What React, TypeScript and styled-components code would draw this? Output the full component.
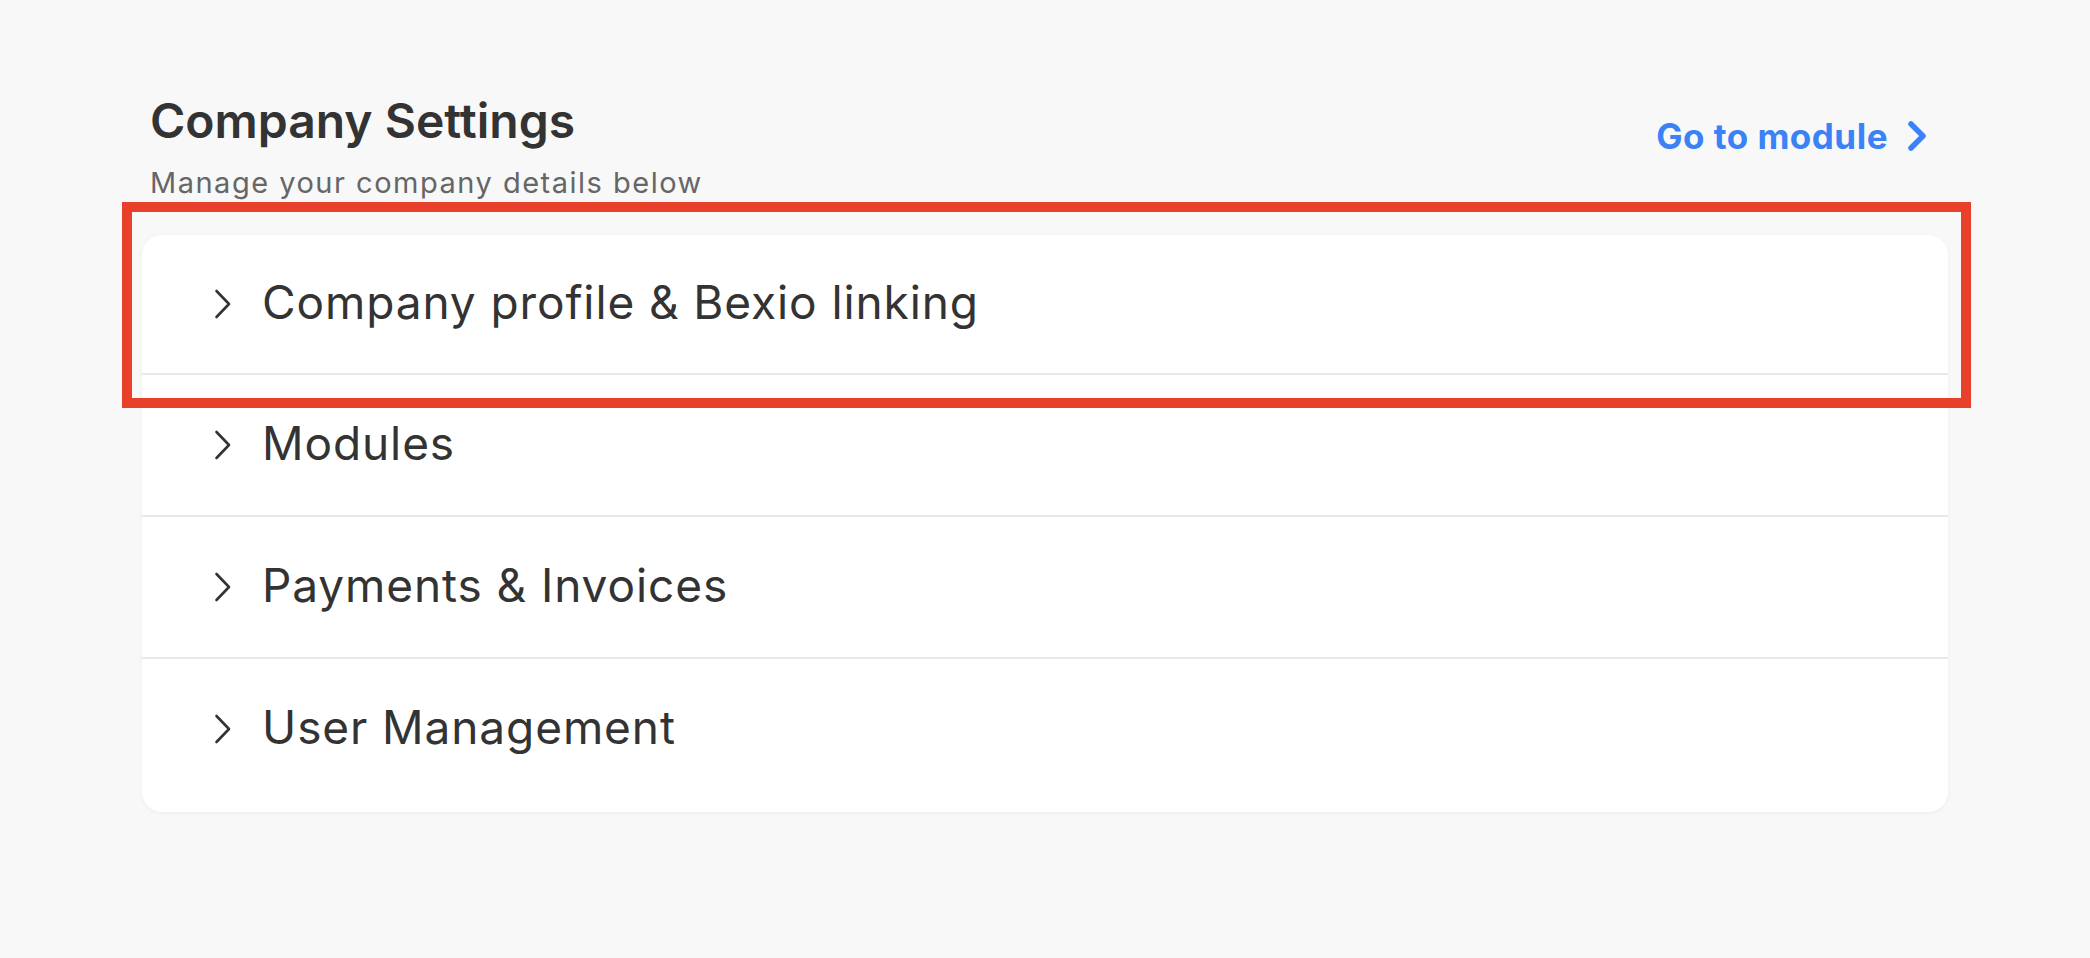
import styled, { createGlobalStyle } from 'styled-components';

const GlobalStyle = createGlobalStyle`
  html, body {
    margin: 0;
    padding: 0;
    background: #f8f8f8;
  }
  body {
    font-family: Inter, "Noto Sans", "Liberation Sans", sans-serif;
    color: #333;
  }
`;

const Page = styled.div`
  min-height: 958px;
  padding: 92px 0 0 142px;
  box-sizing: border-box;
`;

const Container = styled.div`
  width: 1806px;
`;

const Header = styled.div`
  display: flex;
  justify-content: space-between;
  align-items: flex-start;
  padding: 0 19px 0 8px;
  margin-bottom: 35px;
`;

const Title = styled.h1`
  margin: 0 0 16px;
  font-size: 48px;
  line-height: 1.2;
  font-weight: 600;
  color: #333;
`;

const Subtitle = styled.p`
  margin: 0;
  font-size: 29px;
  line-height: 1.2;
  letter-spacing: 1.5px;
  font-weight: 400;
  color: #666;
`;

const ModuleLink = styled.a`
  display: flex;
  align-items: center;
  gap: 19px;
  margin-top: 23px;
  font-size: 35px;
  line-height: 1.2;
  letter-spacing: 0.5px;
  font-weight: 700;
  color: #3b82f6;
  text-decoration: none;
  cursor: pointer;
`;

const Card = styled.div`
  background: #fff;
  border-radius: 20px;
  box-shadow: 0 1px 4px rgba(0, 0, 0, 0.05);
  padding-bottom: 13px;
`;

const Row = styled.div<{ $first?: boolean }>`
  position: relative;
  display: flex;
  align-items: center;
  gap: 30px;
  height: ${(p) => (p.$first ? '138px' : '140px')};
  padding-left: 72px;
  border-top: ${(p) => (p.$first ? 'none' : '2px solid #e8e8e8')};
  font-size: 46px;
  letter-spacing: 0.9px;
  color: #333;
  cursor: pointer;
`;

const Label = styled.span`
  line-height: 1.2;
  margin-top: -4px;
`;

const Highlight = styled.div`
  position: absolute;
  top: -33px;
  left: -20px;
  right: -23px;
  bottom: -35px;
  border: 10px solid #e8402a;
  pointer-events: none;
  z-index: 1;
`;

const Chevron = () => (
  <svg width="18" height="32" viewBox="0 0 18 32" fill="none">
    <polyline
      points="2.5,3 15,16 2.5,29"
      stroke="#333"
      strokeWidth="2.6"
      strokeLinecap="round"
      strokeLinejoin="round"
    />
  </svg>
);

const LinkChevron = () => (
  <svg width="22" height="34" viewBox="0 0 22 34" fill="none">
    <polyline
      points="4,5 16,17 4,29"
      stroke="#3b82f6"
      strokeWidth="5.5"
      strokeLinecap="round"
      strokeLinejoin="round"
    />
  </svg>
);

const sections = [
  'Company profile & Bexio linking',
  'Modules',
  'Payments & Invoices',
  'User Management',
];

const App = () => {
  return (
    <Page>
      <GlobalStyle />
      <Container>
        <Header>
          <div>
            <Title>Company Settings</Title>
            <Subtitle>Manage your company details below</Subtitle>
          </div>
          <ModuleLink>
            Go to module
            <LinkChevron />
          </ModuleLink>
        </Header>
        <Card>
          {sections.map((s, i) => (
            <Row key={s} $first={i === 0}>
              {i === 0 && <Highlight />}
              <Chevron />
              <Label>{s}</Label>
            </Row>
          ))}
        </Card>
      </Container>
    </Page>
  );
};

export default App;
